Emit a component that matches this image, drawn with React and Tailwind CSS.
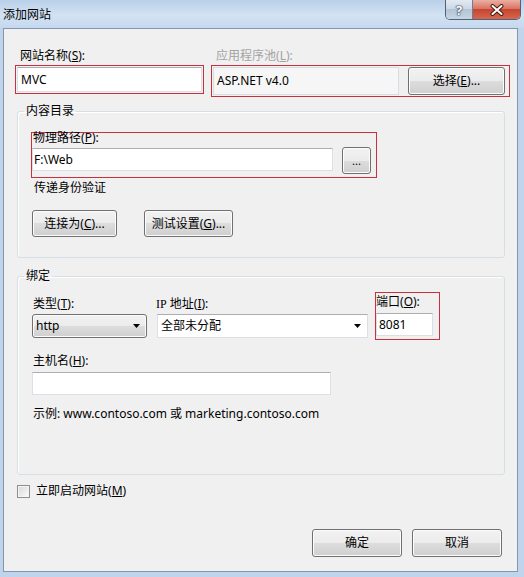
import React from "react";

const face =
  "rounded-[3px] border border-[#707070] bg-[linear-gradient(to_bottom,#f2f2f2_0%,#ebebeb_50%,#dddddd_50%,#cfcfcf_100%)] shadow-[inset_0_0_0_1px_#fcfcfc]";
const btn = `flex items-center justify-center ${face}`;
const box = "bg-white border border-[#dbdfe6] border-t-[#abadb3]";
const mark = "border border-[#c9303e]";

const Key = ({ k }) => (
  <>
    (<span className="underline">{k}</span>)
  </>
);

const Arrow = () => (
  <svg width="7" height="4" viewBox="0 0 7 4">
    <path d="M0 0h7L3.5 4z" fill="#000" />
  </svg>
);

const App = () => {
  return (
    <div className="w-[524px] h-[577px] flex flex-col bg-[#c0d5ec] text-[12px] leading-[16px] text-black font-['Noto_Sans','Noto_Sans_CJK_SC',sans-serif]">
      {/* Title bar */}
      <div className="h-[28px] flex justify-between bg-[linear-gradient(to_bottom,#b9d0e9,#d3e2f3_55%,#c4d8ee)]">
        <span className="pl-[3px] pt-[7px]">添加网站</span>
        <div className="mr-[3px] flex h-[20px] border border-t-0 border-[#4f6278] rounded-b-[5px] overflow-hidden">
          <div className="w-[27px] flex items-center justify-center border-r border-[#6e7f93] bg-[linear-gradient(to_bottom,#e2eaf3,#c9d6e4_50%,#b4c4d6_50%,#c7d5e3)]">
            <span className="font-bold text-[13px] text-white [text-shadow:0_0_1px_#26384e,0_0_1px_#26384e,0_0_2px_#26384e]">?</span>
          </div>
          <div className="w-[47px] flex items-center justify-center bg-[linear-gradient(to_bottom,#eab0a3,#d97564_45%,#c6462f_50%,#d7664f)]">
            <svg width="14" height="12" viewBox="0 0 14 12">
              <path d="M2.5 2l9 8M11.5 2l-9 8" stroke="#4a1a12" strokeWidth="4" strokeLinecap="round" />
              <path d="M2.5 2l9 8M11.5 2l-9 8" stroke="#fff" strokeWidth="2" strokeLinecap="round" />
            </svg>
          </div>
        </div>
      </div>

      <div className="flex flex-1">
        <div className="w-[3px]" />
        <div className="flex-1 flex flex-col border border-[#8396ad] bg-[#f0f0f0]">
          {/* Site name + app pool */}
          <div className="flex items-start mt-[19px] ml-[11px] gap-[7px]">
            <div className="w-[189px]">
              <div className="pl-[5px]">
                网站名称<Key k="S" />:
              </div>
              <div className={`mt-[1px] h-[29px] p-px ${mark}`}>
                <div className={`h-full pl-[3px] flex items-center ${box}`}>MVC</div>
              </div>
            </div>
            <div className="w-[299px]">
              <div className="pl-[5px] text-[#a3a3a3]">
                应用程序池<Key k="L" />:
              </div>
              <div className={`mt-[1px] h-[32px] flex items-center pl-px pr-[4px] ${mark}`}>
                <div className="w-[186px] h-[28px] flex items-center pl-[3px] bg-[#f6f6f6] border border-[#d9dde2]">
                  ASP.NET v4.0
                </div>
                <button className={`ml-[9px] w-[97px] h-[28px] ${btn}`}>
                  选择<Key k="E" />...
                </button>
              </div>
            </div>
          </div>

          {/* Content directory */}
          <fieldset className="mt-[6px] ml-[13px] mr-[12px] pb-[20px] border border-[#d5dfe5] rounded-[3px] shadow-[inset_1px_1px_0_#fff]">
            <legend className="ml-[6px] px-[2px]">内容目录</legend>
            <div className={`ml-[13px] mt-[13px] w-[346px] h-[46px] ${mark}`}>
              <div className="-mt-[3px] pl-[1px]">
                物理路径<Key k="P" />:
              </div>
              <div className="flex items-start mt-[1px]">
                <div className={`mt-[1px] w-[301px] h-[23px] flex items-center pl-[1px] ${box}`}>F:\Web</div>
                <button className={`ml-[9px] w-[29px] h-[27px] text-[11px] ${btn}`}>...</button>
              </div>
            </div>
            <div className="ml-[16px] mt-[2px]">传递身份验证</div>
            <div className="flex ml-[14px] mt-[14px] gap-[27px]">
              <button className={`w-[85px] h-[27px] ${btn}`}>
                连接为<Key k="C" />...
              </button>
              <button className={`w-[89px] h-[27px] ${btn}`}>
                测试设置<Key k="G" />...
              </button>
            </div>
          </fieldset>

          {/* Binding */}
          <fieldset className="mt-[10px] ml-[13px] mr-[12px] pb-[52px] border border-[#d5dfe5] rounded-[3px] shadow-[inset_1px_1px_0_#fff]">
            <legend className="ml-[6px] px-[2px]">绑定</legend>
            <div className="flex items-start">
              <div className="ml-[14px] mt-[12px] w-[115px]">
                <div className="pl-[1px]">
                  类型<Key k="T" />:
                </div>
                <div className={`mt-[2px] h-[24px] flex items-center justify-between pl-[3px] pr-[6px] ${face}`}>
                  <span>http</span>
                  <Arrow />
                </div>
              </div>
              <div className="ml-[9px] mt-[12px] w-[212px]">
                <div>
                  <span className="font-['Liberation_Serif',serif]">IP</span> 地址<Key k="I" />:
                </div>
                <div className={`ml-px mt-[2px] h-[24px] flex items-center justify-between pl-[3px] pr-[6px] ${box}`}>
                  <span>全部未分配</span>
                  <Arrow />
                </div>
              </div>
              <div className={`ml-[7px] mt-[8px] w-[65px] h-[48px] ${mark}`}>
                <div className="mt-px">
                  端口<Key k="O" />:
                </div>
                <div className={`mt-[3px] w-[57px] h-[23px] flex items-center pl-[2px] ${box}`}>8081</div>
              </div>
            </div>
            <div className="ml-[15px] mt-[13px]">
              主机名<Key k="H" />:
            </div>
            <div className={`ml-[14px] mt-[3px] w-[299px] h-[23px] ${box}`} />
            <div className="ml-[15px] mt-[11px]">示例: www.contoso.com 或 marketing.contoso.com</div>
          </fieldset>

          {/* Start now */}
          <div className="flex items-center mt-[8px] ml-[13px]">
            <div className="w-[13px] h-[13px] border border-[#8e8f8f] bg-[linear-gradient(135deg,#d8d8d8,#fbfbfb)] shadow-[inset_0_0_0_1px_#f4f4f4]" />
            <span className="ml-[6px]">
              立即启动网站<Key k="M" />
            </span>
          </div>

          <div className="flex justify-end gap-[10px] mt-[30px] mr-[15px]">
            <button
              className={`w-[90px] h-[28px] ${btn} border-[#3c7fb1] shadow-[inset_0_0_0_1px_#b9e2f5,inset_0_0_0_2px_#e6f3fa]`}
            >
              确定
            </button>
            <button className={`w-[90px] h-[28px] ${btn}`}>取消</button>
          </div>
        </div>
        <div className="w-[6px]" />
      </div>
      <div className="h-[5px]" />
    </div>
  );
};

export default App;
